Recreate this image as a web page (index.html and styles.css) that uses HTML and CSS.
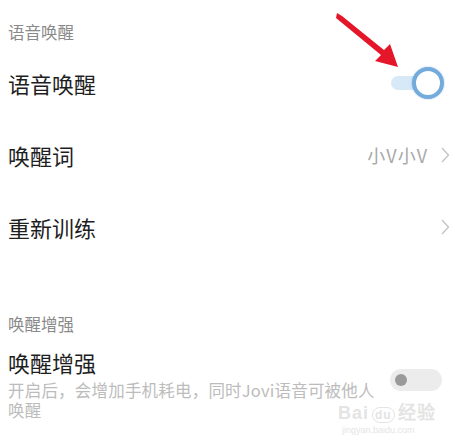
FILE: index.html
```html
<!DOCTYPE html>
<html lang="zh-CN">
<head>
  <meta charset="UTF-8">
  <meta name="viewport" content="width=device-width, initial-scale=1.0">
  <title>语音唤醒</title>
  <link rel="stylesheet" href="styles.css">
</head>
<body>
  <div class="page">
    <div class="group-title">语音唤醒</div>
    <div class="row">
      <span class="row-label">语音唤醒</span>
      <div class="switch on"><span class="knob"></span></div>
    </div>
    <div class="row">
      <span class="row-label">唤醒词</span>
      <div class="row-right">
        <span class="row-value">小V小V</span>
        <svg class="chevron" width="10" height="16" viewBox="0 0 10 16"><polyline points="2,1 8.5,8 2,15" fill="none" stroke="#c4c4c4" stroke-width="1.4"/></svg>
      </div>
    </div>
    <div class="row">
      <span class="row-label">重新训练</span>
      <div class="row-right">
        <svg class="chevron" width="10" height="16" viewBox="0 0 10 16"><polyline points="2,1 8.5,8 2,15" fill="none" stroke="#c4c4c4" stroke-width="1.4"/></svg>
      </div>
    </div>

    <div class="group-title second">唤醒增强</div>
    <div class="row-desc">
      <div class="desc-text">
        <div class="row-label">唤醒增强</div>
        <div class="desc">
          <div class="desc-line">开启后，会增加手机耗电，同时Jovi语音可被他人</div>
          <div class="desc-line short">唤醒</div>
        </div>
      </div>
      <div class="switch off"><span class="knob"></span></div>
    </div>
  </div>

  <!-- 标注箭头 -->
  <svg class="arrow" width="457" height="100" viewBox="0 0 457 100">
    <polygon points="337,13 342,16 384,50 390,44 398,67 375,61 381,55 336,18" fill="#e6162a"/>
  </svg>

  <div class="watermark">
    <div class="wm-main">Bai<span class="wm-du">du</span>经验</div>
    <div class="wm-sub">jingyan.baidu.com</div>
  </div>
</body>
</html>
```

FILE: styles.css
```css
body { margin: 0; background: #fff; font-family: "Noto Sans CJK SC", "Noto Sans", sans-serif; }
.page { position: relative; width: 457px; height: 436px; padding: 22px 0 0 8px; box-sizing: border-box; overflow: hidden; }
.group-title { font-size: 16.5px; line-height: 20px; color: #8a8a8a; margin-bottom: 5px; }
.group-title.second { margin-top: 51px; margin-bottom: 0; }
.row { height: 72px; display: flex; align-items: center; justify-content: space-between; padding-right: 7px; }
.row-label { font-size: 22px; line-height: 32px; color: #1e1e1e; }
.row-right { display: flex; align-items: center; gap: 12px; }
.row-value { font-size: 18px; color: #a8a8a8; letter-spacing: 1px; }
.chevron { display: block; }

.switch { position: relative; border-radius: 14px; }
.switch.on { width: 52px; height: 14px; margin-right: 7px; background: linear-gradient(90deg, rgba(190,218,242,0.6), #d3e6f6); }
.switch.on .knob { position: absolute; right: -1px; top: -9px; width: 24px; height: 24px; border: 4px solid #72abdc; border-radius: 50%; background: #fff; box-shadow: 0 0 2px rgba(80,140,200,0.5); }
.switch.off { width: 52px; height: 22px; margin-right: 15px; margin-top: -6px; background: #ececec; border-radius: 11px; }
.switch.off .knob { position: absolute; left: 5px; top: 5px; width: 12px; height: 12px; border-radius: 50%; background: #9a9a9a; }

.row-desc { display: flex; align-items: center; justify-content: space-between; margin-top: 12px; }
.desc-text { width: 372px; }
.desc { font-size: 16.5px; line-height: 20px; color: #bcbcbc; letter-spacing: 0.2px; margin-top: 2px; white-space: nowrap; }
.desc-line { height: 20px; }
.desc-line.short { width: 40px; }

.arrow { position: absolute; left: 0; top: 0; }
.watermark { position: absolute; left: 338px; top: 404px; color: #e4e4e4; font-family: "Liberation Sans", sans-serif; }
.wm-main { font-size: 18px; line-height: 19px; font-weight: bold; letter-spacing: 1px; }
.wm-du { font-size: 12px; border: 1px solid #e4e4e4; border-radius: 8px; padding: 0 2px; margin: 0 3px; }
.wm-sub { font-size: 9px; line-height: 11px; padding-left: 4px; }
```
